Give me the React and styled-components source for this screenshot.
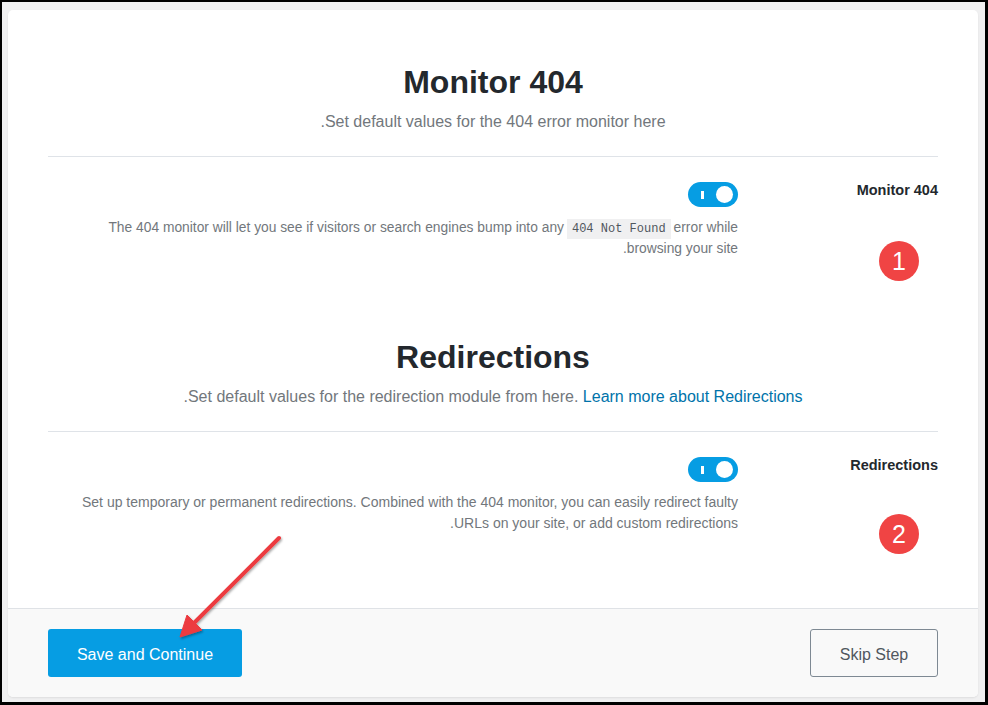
import React from 'react';
import styled, { createGlobalStyle } from 'styled-components';

const Global = createGlobalStyle`
  html, body { margin: 0; padding: 0; background: #000; }
  body { font-family: "Liberation Sans", Arial, sans-serif; }
  * { box-sizing: border-box; }
`;

const Frame = styled.div`
  position: relative;
  width: 988px;
  height: 705px;
  border: 2px solid #000;
  border-right-width: 3px;
  border-bottom-width: 3px;
  background: #f0f0f1;
  padding: 8px 7px 5px 6px;
  direction: rtl;
`;

const Card = styled.div`
  height: 100%;
  display: flex;
  flex-direction: column;
  background: #fff;
  border-radius: 5px;
  box-shadow: 0 1px 2px rgba(0, 0, 0, 0.08);
  overflow: hidden;
`;

const Content = styled.div`
  flex: 1;
  min-height: 0;
  padding: 52px 40px 0;
`;

const Section = styled.section`
  margin-bottom: 78px;

  &:last-child {
    margin-bottom: 0;
  }
`;

const Header = styled.header`
  text-align: center;
  padding-bottom: 22px;
  border-bottom: 1px solid #dfe3e8;
`;

const Title = styled.h2`
  margin: 0 0 8px;
  font: 700 32px/40px "Liberation Sans", Arial, sans-serif;
  color: #23282d;
`;

const Subtitle = styled.p`
  margin: 0;
  font-size: 16px;
  line-height: 24px;
  color: #72777c;
`;

const Link = styled.a`
  color: #0073aa;
  text-decoration: none;
`;

const Row = styled.div`
  position: relative;
  display: flex;
  padding-top: 25px;
`;

const LabelCol = styled.div`
  flex: none;
  width: 200px;
  font-size: 14.5px;
  line-height: 17px;
  font-weight: 700;
  color: #23282d;
`;

const ControlCol = styled.div`
  flex: 1;
  display: flex;
  flex-direction: column;
  align-items: flex-start;
`;

const Toggle = styled.span`
  position: relative;
  display: block;
  width: 50px;
  height: 25px;
  border-radius: 13px;
  background: #069de3;

  &::before {
    content: "";
    position: absolute;
    left: 13px;
    top: 9px;
    width: 3px;
    height: 8px;
    background: #fff;
  }

  &::after {
    content: "";
    position: absolute;
    right: 5px;
    top: 4px;
    width: 17px;
    height: 17px;
    border-radius: 50%;
    background: #fff;
  }
`;

const Description = styled.p`
  margin: 10px 0 0;
  max-width: ${(p) => p.$max || 690}px;
  font-size: ${(p) => p.$size || 14}px;
  line-height: 21px;
  color: #72777c;
  text-align: right;
`;

const Code = styled.code`
  font-family: "Liberation Mono", "DejaVu Sans Mono", monospace;
  font-size: 12px;
  line-height: 1;
  color: #50575e;
  background: #f0f0f1;
  padding: 3px 5px;
  margin: 0 3px;
`;

const Badge = styled.span`
  position: absolute;
  right: 19px;
  top: ${(p) => p.$top}px;
  width: 40px;
  height: 40px;
  border-radius: 50%;
  background: #f04444;
  color: #fff;
  font: 400 25px/40px "Liberation Sans", Arial, sans-serif;
  text-align: center;
`;

const Footer = styled.footer`
  flex: none;
  height: 89px;
  display: flex;
  align-items: center;
  justify-content: space-between;
  padding: 0 40px;
  border-top: 1px solid #dfe2e6;
  background: #f9f9f9;
`;

const PrimaryButton = styled.button`
  width: 194px;
  height: 48px;
  padding: 3px 0 0;
  border: none;
  border-radius: 3px;
  background: #069de3;
  color: #fff;
  font: 400 16px "Liberation Sans", Arial, sans-serif;
`;

const SecondaryButton = styled.button`
  width: 128px;
  height: 48px;
  padding: 3px 0 0;
  border: 1px solid #7e8993;
  border-radius: 3px;
  background: transparent;
  color: #50575e;
  font: 400 16px "Liberation Sans", Arial, sans-serif;
`;

const ArrowLayer = styled.svg`
  position: absolute;
  left: -2px;
  top: -2px;
  pointer-events: none;
`;

export default function App() {
  return (
    <>
      <Global />
      <Frame>
        <Card>
          <Content>
            <Section>
              <Header>
                <Title>Monitor 404</Title>
                <Subtitle>Set default values for the 404 error monitor here.</Subtitle>
              </Header>
              <Row>
                <LabelCol>Monitor 404</LabelCol>
                <ControlCol>
                  <Toggle />
                  <Description $size={13.8} $max={650}>
                    The 404 monitor will let you see if visitors or search engines bump into any
                    <Code>404 Not Found</Code>
                    error while browsing your site.
                  </Description>
                </ControlCol>
                <Badge $top={84}>1</Badge>
              </Row>
            </Section>
            <Section>
              <Header>
                <Title>Redirections</Title>
                <Subtitle>
                  Set default values for the redirection module from here.{' '}
                  <Link href="#">Learn more about Redirections</Link>.
                </Subtitle>
              </Header>
              <Row>
                <LabelCol>Redirections</LabelCol>
                <ControlCol>
                  <Toggle />
                  <Description>
                    Set up temporary or permanent redirections. Combined with the 404 monitor, you can
                    easily redirect faulty URLs on your site, or add custom redirections.
                  </Description>
                </ControlCol>
                <Badge $top={82}>2</Badge>
              </Row>
            </Section>
          </Content>
          <Footer>
            <SecondaryButton>Skip Step</SecondaryButton>
            <PrimaryButton>Save and Continue</PrimaryButton>
          </Footer>
        </Card>
        <ArrowLayer width="988" height="705" viewBox="0 0 988 705">
          <defs>
            <filter id="sh" x="-20%" y="-20%" width="140%" height="140%">
              <feDropShadow dx="1" dy="1.5" stdDeviation="1.2" floodColor="#000" floodOpacity="0.35" />
            </filter>
          </defs>
          <g filter="url(#sh)" fill="#ec3b3f" stroke="#ec3b3f">
            <line x1="279" y1="538" x2="192" y2="625" strokeWidth="4" strokeLinecap="round" />
            <polygon points="180,637 187,615 202,630" strokeWidth="1" strokeLinejoin="round" />
          </g>
        </ArrowLayer>
      </Frame>
    </>
  );
}
